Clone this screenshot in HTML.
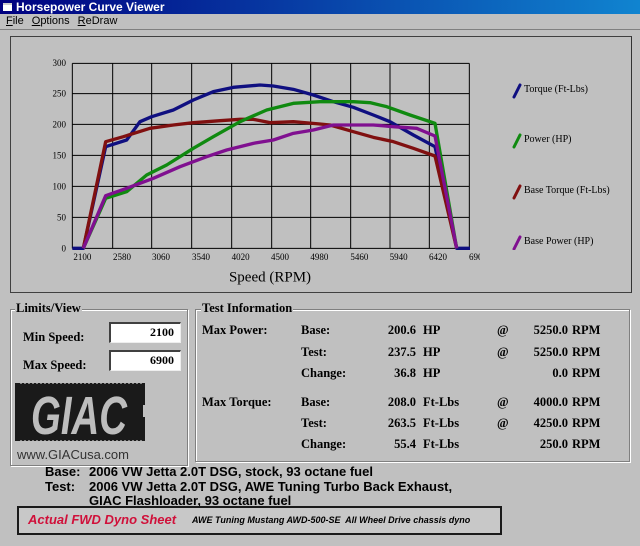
<!DOCTYPE html>
<html><head><style>
*{margin:0;padding:0;box-sizing:border-box}
body{width:640px;height:546px;background:#c0c0c0;position:relative;overflow:hidden;font-family:"Liberation Serif",serif;color:#000}
.a{position:absolute;white-space:nowrap}
.title{left:0;top:0;width:640px;height:14px;background:linear-gradient(90deg,#000080,#1084d0);color:#fff;font:bold 12px "Liberation Sans",sans-serif;padding-left:16px;line-height:14px}
.menu{top:15px;left:6px;font:11px "Liberation Sans",sans-serif}
.menu span{margin-right:8px}
.grp{position:absolute;border:1px solid #808080;box-shadow:1px 1px 0 #fff inset,1px 1px 0 #fff}
.lg{font-size:10px;left:524px}
.r{font-size:12.5px;font-weight:bold}
.rr{text-align:right}
.in{position:absolute;background:#fff;border-top:2px solid #404040;border-left:2px solid #404040;border-right:1px solid #eee;border-bottom:1px solid #eee;font:bold 12px "Liberation Serif",serif;text-align:right;padding-right:6px;line-height:17px}
.bt{font:bold 13px "Liberation Sans",sans-serif;line-height:14px}
</style></head><body>
<div class="a title">Horsepower Curve Viewer</div>
<div class="a" style="left:3px;top:3px;width:9px;height:8px;background:#fff;border-top:2px solid #ccc"></div>
<div class="a menu"><span><u>F</u>ile</span><span><u>O</u>ptions</span><span><u>R</u>eDraw</span></div>
<div class="a" style="left:0;top:29px;width:640px;height:1px;background:#808080"></div>
<div class="a" style="left:10px;top:36px;width:622px;height:257px;border:1px solid #404040;border-right-color:#333"></div>
<svg class="a" style="left:40px;top:50px" width="440" height="240" viewBox="0 0 1320 720">
<g stroke="#000" stroke-width="3" fill="none">
<path d="M97 40H1288M97 131H1288M97 223H1288M97 316H1288M97 409H1288M97 502H1288M97 595H1288"/>
<path d="M97 40V595M218 40V595M335 40V595M455 40V595M575 40V595M695 40V595M812 40V595M932 40V595M1050 40V595M1168 40V595M1288 40V595"/>
</g>
<g font-family="Liberation Serif" font-size="27" fill="#000" text-anchor="end">
<text x="78" y="48">300</text><text x="78" y="140">250</text><text x="78" y="232">200</text><text x="78" y="325">150</text><text x="78" y="418">100</text><text x="78" y="511">50</text><text x="78" y="604">0</text>
</g>
<g font-family="Liberation Serif" font-size="27" fill="#000" text-anchor="middle">
<text x="127" y="630">2100</text><text x="246" y="630">2580</text><text x="363" y="630">3060</text><text x="483" y="630">3540</text><text x="602" y="630">4020</text><text x="720" y="630">4500</text><text x="838" y="630">4980</text><text x="958" y="630">5460</text><text x="1076" y="630">5940</text><text x="1194" y="630">6420</text><text x="1314" y="630">6900</text>
</g>
<text x="690" y="695" font-family="Liberation Serif" font-size="45" text-anchor="middle">Speed (RPM)</text>
<g fill="none" stroke-width="10" stroke-linejoin="round">
<path stroke="#0f0f80" d="M97 595L130 595L197 290L260 270L300 215L335 200L400 180L460 150L520 125L580 112L660 105L700 108L760 118L820 135L880 155L940 172L1000 195L1050 215L1120 255L1185 290L1250 595L1290 595"/>
<path stroke="#801010" d="M130 595L197 275L250 260L330 235L400 225L460 218L540 212L600 208L640 208L690 218L760 215L840 222L870 225L940 245L1000 262L1060 275L1120 295L1185 318L1250 595"/>
<path stroke="#108a10" d="M130 595L197 445L260 425L320 375L380 345L460 295L520 260L600 215L680 180L760 160L840 155L940 155L990 158L1040 170L1110 195L1185 220L1250 595"/>
<path stroke="#801090" d="M130 595L197 437L260 415L340 385L420 350L500 320L560 300L640 280L700 270L760 250L820 240L880 225L1000 225L1060 230L1130 235L1185 258L1250 595"/>
</g>
</svg>
<svg class="a" style="left:512px;top:80px" width="12" height="170">
<g stroke-width="3" stroke-linecap="round"><path stroke="#0f0f80" d="M2 17L8 5"/><path stroke="#108a10" d="M2 67L8 55"/><path stroke="#801010" d="M2 118L8 106"/><path stroke="#801090" d="M2 169L8 157"/></g>
</svg>
<div class="a lg" style="top:84px">Torque (Ft-Lbs)</div>
<div class="a lg" style="top:134px">Power (HP)</div>
<div class="a lg" style="top:185px">Base Torque (Ft-Lbs)</div>
<div class="a lg" style="top:236px">Base Power (HP)</div>

<div class="grp" style="left:10px;top:309px;width:178px;height:157px"></div>
<div class="a" style="left:15px;top:301px;font-size:12.5px;font-weight:bold;background:#c0c0c0;padding:0 1px">Limits/View</div>
<div class="a r" style="left:23px;top:330px">Min Speed:</div>
<div class="a r" style="left:23px;top:358px">Max Speed:</div>
<div class="in" style="left:109px;top:322px;width:72px;height:21px">2100</div>
<div class="in" style="left:109px;top:350px;width:72px;height:21px">6900</div>
<svg class="a" style="left:15px;top:380px" width="132" height="64">
<rect x="0" y="3" width="130" height="58" fill="#1a1a1a"/>
<g stroke="#c0c0c0" stroke-width="1.3">
<path d="M6 0V4M10 0V4M14 0V4M18 0V4M22 0V4M26 0V4M30 0V4M34 0V4M38 0V4M42 0V4M46 0V4M50 0V4M54 0V4M58 0V4M62 0V4M66 0V4M70 0V4M74 0V4M78 0V4M82 0V4M86 0V4M90 0V4M94 0V4M98 0V4M102 0V4M106 0V4M110 0V4M114 0V4M118 0V4M122 0V4M126 0V4"/>
<path d="M6 60V64M10 60V64M14 60V64M18 60V64M22 60V64M26 60V64M30 60V64M34 60V64M38 60V64M42 60V64M46 60V64M50 60V64M54 60V64M58 60V64M62 60V64M66 60V64M70 60V64M74 60V64M78 60V64M82 60V64M86 60V64M90 60V64M94 60V64M98 60V64M102 60V64M106 60V64M110 60V64M114 60V64M118 60V64M122 60V64M126 60V64"/>
</g>
<rect x="128" y="25" width="4" height="12" fill="#c0c0c0"/>
<text x="64" y="54" font-family="Liberation Sans" font-weight="bold" font-style="italic" font-size="54" fill="#bdbdbd" text-anchor="middle" textLength="96" lengthAdjust="spacingAndGlyphs">GIAC</text>
</svg>
<div class="a" style="left:17px;top:447px;font:13px 'Liberation Sans',sans-serif;color:#333">www.GIACusa.com</div>

<div class="grp" style="left:195px;top:309px;width:435px;height:153px"></div>
<div class="a" style="left:201px;top:301px;font-size:12.5px;font-weight:bold;background:#c0c0c0;padding:0 1px">Test Information</div>
<div class="a r" style="left:202px;top:323px">Max Power:</div>
<div class="a r" style="left:202px;top:395px">Max Torque:</div>
<div class="a r" style="left:301px;top:323px">Base:</div>
<div class="a r" style="left:301px;top:345px">Test:</div>
<div class="a r" style="left:301px;top:366px">Change:</div>
<div class="a r" style="left:301px;top:395px">Base:</div>
<div class="a r" style="left:301px;top:416px">Test:</div>
<div class="a r" style="left:301px;top:437px">Change:</div>
<div class="a r rr" style="left:360px;width:56px;top:323px">200.6</div>
<div class="a r rr" style="left:360px;width:56px;top:345px">237.5</div>
<div class="a r rr" style="left:360px;width:56px;top:366px">36.8</div>
<div class="a r rr" style="left:360px;width:56px;top:395px">208.0</div>
<div class="a r rr" style="left:360px;width:56px;top:416px">263.5</div>
<div class="a r rr" style="left:360px;width:56px;top:437px">55.4</div>
<div class="a r" style="left:423px;top:323px">HP</div>
<div class="a r" style="left:423px;top:345px">HP</div>
<div class="a r" style="left:423px;top:366px">HP</div>
<div class="a r" style="left:423px;top:395px">Ft-Lbs</div>
<div class="a r" style="left:423px;top:416px">Ft-Lbs</div>
<div class="a r" style="left:423px;top:437px">Ft-Lbs</div>
<div class="a r" style="left:497px;top:323px">@</div>
<div class="a r" style="left:497px;top:345px">@</div>
<div class="a r" style="left:497px;top:395px">@</div>
<div class="a r" style="left:497px;top:416px">@</div>
<div class="a r rr" style="left:500px;width:68px;top:323px">5250.0</div>
<div class="a r rr" style="left:500px;width:68px;top:345px">5250.0</div>
<div class="a r rr" style="left:500px;width:68px;top:366px">0.0</div>
<div class="a r rr" style="left:500px;width:68px;top:395px">4000.0</div>
<div class="a r rr" style="left:500px;width:68px;top:416px">4250.0</div>
<div class="a r rr" style="left:500px;width:68px;top:437px">250.0</div>
<div class="a r" style="left:572px;top:323px">RPM</div>
<div class="a r" style="left:572px;top:345px">RPM</div>
<div class="a r" style="left:572px;top:366px">RPM</div>
<div class="a r" style="left:572px;top:395px">RPM</div>
<div class="a r" style="left:572px;top:416px">RPM</div>
<div class="a r" style="left:572px;top:437px">RPM</div>

<div class="a bt" style="left:45px;top:465px">Base:</div>
<div class="a bt" style="left:45px;top:480px">Test:</div>
<div class="a bt" style="left:89px;top:465px">2006 VW Jetta 2.0T DSG, stock, 93 octane fuel</div>
<div class="a bt" style="left:89px;top:480px">2006 VW Jetta 2.0T DSG, AWE Tuning Turbo Back Exhaust,</div>
<div class="a bt" style="left:89px;top:494px">GIAC Flashloader, 93 octane fuel</div>
<div class="a" style="left:17px;top:506px;width:485px;height:29px;border:2px solid #1a1a1a;background:#c8c8c8"></div>
<div class="a" style="left:28px;top:512px;font:italic bold 13px 'Liberation Sans',sans-serif;color:#d0103a">Actual FWD Dyno Sheet</div>
<div class="a" style="left:192px;top:515px;font:italic bold 9px 'Liberation Sans',sans-serif">AWE Tuning Mustang AWD-500-SE&nbsp; All Wheel Drive chassis dyno</div>
</body></html>
